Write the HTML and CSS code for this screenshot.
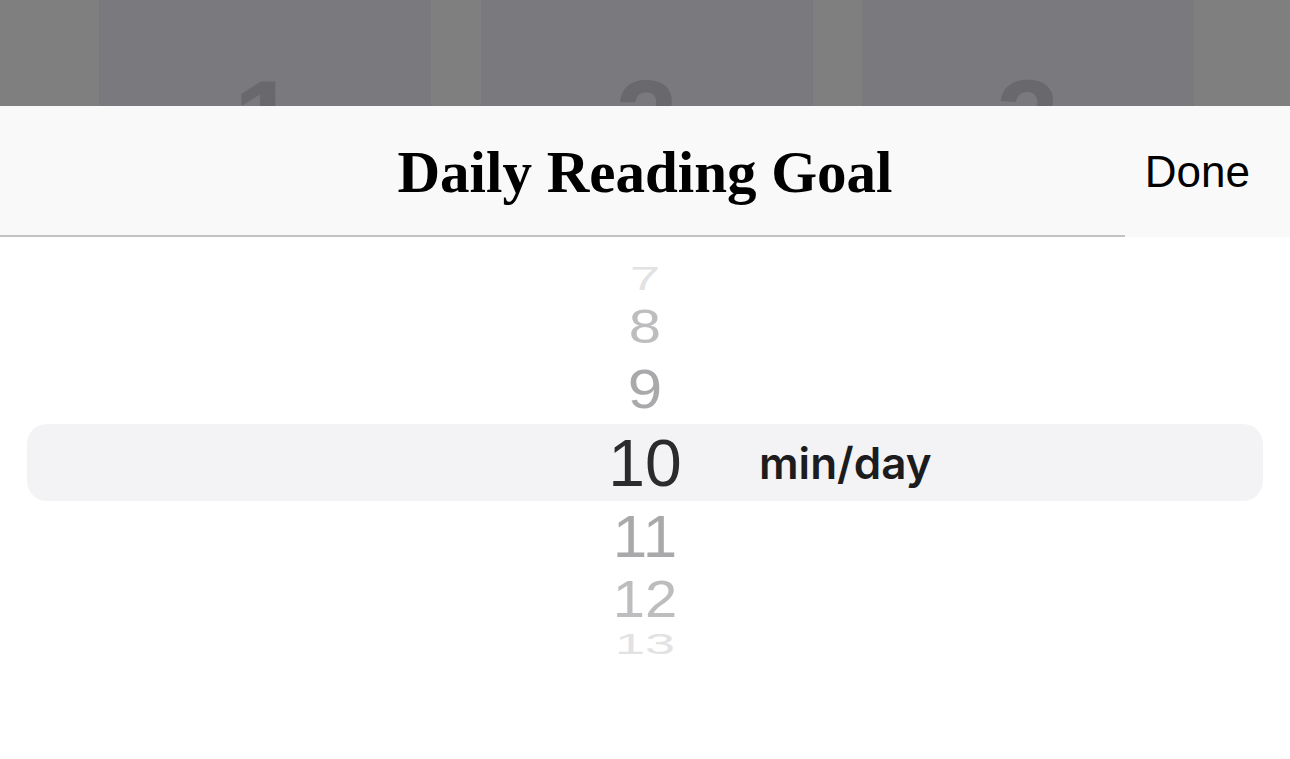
FILE: index.html
```html
<!DOCTYPE html>
<html lang="en">
<head>
  <meta charset="UTF-8">
  <title>Daily Reading Goal</title>
  <link rel="stylesheet" href="styles.css">
</head>
<body>
  <!-- Pantalla de fondo atenuada -->
  <div class="backdrop">
    <div class="card"><span>1</span></div>
    <div class="card"><span>2</span></div>
    <div class="card"><span>3</span></div>
  </div>

  <div class="sheet">
    <div class="sheet-header">
      <div class="title">Daily Reading Goal</div>
      <div class="done">Done</div>
    </div>
    <div class="divider"></div>

    <!-- Rueda de selección -->
    <div class="wheel">
      <div class="row far top h38"><span class="num">7</span></div>
      <div class="row near top h56"><span class="num">8</span></div>
      <div class="row close top h70"><span class="num">9</span></div>
      <div class="row selected"><span class="num">10</span><span class="unit">min/day</span></div>
      <div class="row close bottom h71"><span class="num">11</span></div>
      <div class="row near bottom h53"><span class="num">12</span></div>
      <div class="row far bottom h35"><span class="num">13</span></div>
    </div>
  </div>
</body>
</html>
```

FILE: styles.css
```css
body {
  margin: 0;
  padding: 0;
  width: 1290px;
  height: 759px;
  overflow: hidden;
  background: #ffffff;
  font-family: 'Liberation Sans', Arial, sans-serif;
}

.backdrop {
  height: 106px;
  background-color: #7f7f7f;
  display: flex;
  gap: 49.5px;
  padding-left: 99px;
  overflow: hidden;
}

.card {
  width: 332px;
  background-color: #7a797e;
  display: flex;
  justify-content: center;
}

.card span {
  font-size: 112px;
  font-weight: bold;
  color: #69686d;
  line-height: 1;
  margin-top: 64px;
}

.sheet {
  background: #ffffff;
}

.sheet-header {
  height: 129px;
  background-color: #f9f9f9;
  display: grid;
  grid-template-columns: 1fr auto 1fr;
  align-items: center;
}

.title {
  grid-column: 2;
  font-family: 'Liberation Serif', 'Times New Roman', serif;
  font-weight: bold;
  font-size: 59px;
  color: #000;
  padding-top: 3px;
}

.done {
  grid-column: 3;
  justify-self: end;
  margin-right: 40px;
  font-size: 44px;
  color: #000;
  padding-top: 3px;
}

.divider {
  height: 2px;
  background: linear-gradient(to right, #c3c3c5 1125px, #f9f9f9 1125px);
}

.wheel {
  padding-top: 23px;
  display: flex;
  flex-direction: column;
}

.row {
  display: grid;
  grid-template-columns: 1fr 140px 1fr;
  align-items: center;
  margin: 0 27px;
}

.num {
  grid-column: 2;
  text-align: center;
  line-height: 30px;
}

.row.selected {
  height: 77px;
  background-color: #f3f3f5;
  border-radius: 20px;
}

.row.selected .num {
  font-size: 66px;
  color: #2b2b2d;
}

.unit {
  grid-column: 3;
  padding-left: 44px;
  font-family: Inter, 'Liberation Sans', sans-serif;
  font-weight: 600;
  font-size: 44px;
  line-height: 1;
  color: #1c1c1e;
}

.close .num {
  font-size: 62px;
  color: #a9a9ab;
}

.near .num {
  font-size: 58px;
  color: #bdbdbf;
}

.far .num {
  font-size: 54px;
  color: #e2e2e4;
}

.close.top .num { transform: scaleY(0.9); }
.close.bottom .num { transform: scaleY(0.95); }
.near.top .num { transform: scaleY(0.84); }
.near.bottom .num { transform: scaleY(0.88); }
.far.top .num { transform: scaleY(0.6); }
.far.bottom .num { transform: scaleY(0.56); }

.h38 { height: 38px; }
.h56 { height: 56px; }
.h70 { height: 70px; }
.h71 { height: 71px; }
.h53 { height: 53px; }
.h35 { height: 35px; }
```
